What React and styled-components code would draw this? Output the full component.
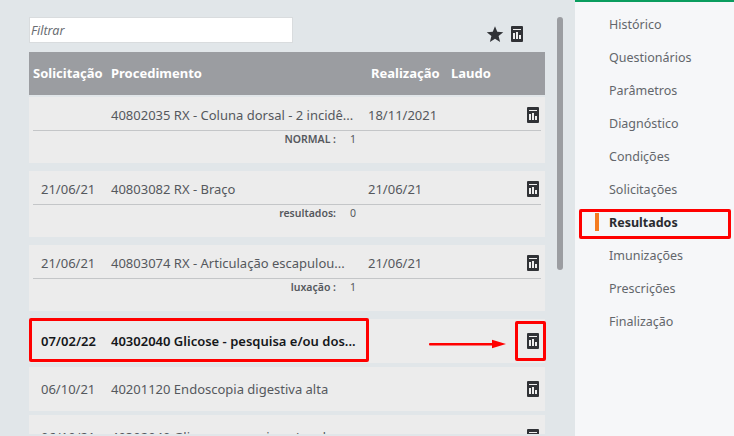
import React from 'react';
import styled, { createGlobalStyle } from 'styled-components';

const rows = [
    { date: '', name: '40802035 RX - Coluna dorsal - 2 incidê...', done: '18/11/2021', label: 'NORMAL :', value: '1' },
    { date: '21/06/21', name: '40803082 RX - Braço', done: '21/06/21', label: 'resultados:', value: '0' },
    { date: '21/06/21', name: '40803074 RX - Articulação escapulou...', done: '21/06/21', label: 'luxação :', value: '1' },
    { date: '07/02/22', name: '40302040 Glicose - pesquisa e/ou dos...', bold: true },
    { date: '06/10/21', name: '40201120 Endoscopia digestiva alta' },
    { date: '06/10/21', name: '40302040 Glicose - pesquisa e/ou dos...' },
];

const menu = [
    'Histórico',
    'Questionários',
    'Parâmetros',
    'Diagnóstico',
    'Condições',
    'Solicitações',
    'Resultados',
    'Imunizações',
    'Prescrições',
    'Finalização',
];

const ReportIcon = () => (
    <IconSvg viewBox='0 0 12 16'>
        <rect width='12' height='16' rx='1' fill='#303236' />
        <rect x='2' y='3' width='8' height='1' fill='#eee' />
        <rect x='2' y='7' width='2' height='6' fill='#eee' />
        <rect x='5' y='6' width='2' height='7' fill='#eee' />
        <rect x='8' y='9' width='2' height='4' fill='#eee' />
    </IconSvg>
);

const App = () => {
    return (
        <>
            <GlobalStyle />
            <Page>
                <Main>
                    <TopBar>
                        <FilterInput placeholder='Filtrar' />
                        <TopIcons>
                            <Star viewBox='0 0 24 24'>
                                <path d='M12 1.500l3 7.600 8 .6-6.200 5.100 2 8-6.800-4.400-6.800 4.400 2-8L1 9.700l8-.6z' fill='#303236' />
                            </Star>
                            <ReportIcon />
                        </TopIcons>
                    </TopBar>
                    <TableHead>
                        <HeadCell $w={78}>Solicitação</HeadCell>
                        <HeadCell $w={260}>Procedimento</HeadCell>
                        <HeadCell $w={80}>Realização</HeadCell>
                        <HeadCell>Laudo</HeadCell>
                    </TableHead>
                    {rows.map((row, i) => (
                        <Row key={i} $bold={row.bold}>
                            <RowMain $hasDetail={!!row.label}>
                                <DateCell>{row.date}</DateCell>
                                <NameCell>{row.name}</NameCell>
                                <DoneCell>{row.done}</DoneCell>
                                <ReportIcon />
                            </RowMain>
                            {row.label && (
                                <Detail>
                                    <DetailLabel>{row.label}</DetailLabel>
                                    <DetailValue>{row.value}</DetailValue>
                                </Detail>
                            )}
                        </Row>
                    ))}
                    <Scrollbar />
                    <MarkRow />
                    <MarkIcon />
                    <Arrow viewBox='0 0 78 10'>
                        <rect x='0' y='4' width='66' height='2.500' rx='1' fill='#f00' />
                        <path d='M63 .8l14 4.200-14 4.200z' fill='#f00' />
                    </Arrow>
                </Main>
                <Side>
                    <SideList>
                        {menu.map((item) => (
                            <SideItem key={item} $active={item === 'Resultados'}>
                                {item}
                            </SideItem>
                        ))}
                    </SideList>
                    <MarkSide />
                </Side>
            </Page>
        </>
    );
};

export default App;

const GlobalStyle = createGlobalStyle`
    html, body {
        margin: 0;
        height: 100%;
        overflow: hidden;
    }
    body {
        font-family: "Noto Sans", "Open Sans", sans-serif;
        background-color: #e1e6e9;
    }
`;

const Page = styled.div`
    display: flex;
    width: 734px;
    height: 436px;
    overflow: hidden;
`;

const Main = styled.div`
    position: relative;
    width: 575px;
    height: 434px;
    padding: 17px 30px 0 29px;
    box-sizing: border-box;
    overflow: hidden;
    flex-shrink: 0;
`;

const TopBar = styled.div`
    display: flex;
    justify-content: space-between;
    height: 26px;
    margin-bottom: 9px;
`;

const FilterInput = styled.input`
    width: 264px;
    height: 26px;
    box-sizing: border-box;
    border: 1px solid #d9dcde;
    background: #fff;
    padding: 0 2px 0 1px;
    font-family: inherit;
    font-size: 12.5px;
    outline: none;

    &::placeholder {
        color: #6a6d72;
        font-style: italic;
        opacity: 1;
    }
`;

const TopIcons = styled.div`
    display: flex;
    align-items: center;
    gap: 7px;
    padding: 4px 22px 0 0;
    height: 30px;
    box-sizing: border-box;
`;

const Star = styled.svg`
    width: 18px;
    height: 18px;
`;

const IconSvg = styled.svg`
    width: 12px;
    height: 16px;
    flex-shrink: 0;
`;

const TableHead = styled.div`
    display: flex;
    align-items: center;
    height: 43px;
    padding: 0 4px 2px;
    margin-bottom: 2px;
    box-sizing: border-box;
    background-color: #9b9da1;
`;

const HeadCell = styled.div`
    width: ${(p) => (p.$w ? `${p.$w}px` : 'auto')};
    font-size: 13px;
    font-weight: 700;
    color: #fff;
    white-space: nowrap;
`;

const Row = styled.div`
    background-color: #ececec;
    margin-bottom: ${(p) => (p.$bold ? '4px' : '8px')};
    font-weight: ${(p) => (p.$bold ? 600 : 400)};
    color: ${(p) => (p.$bold ? '#15171a' : '#55585d')};

    &:nth-of-type(n + 7) {
        margin-bottom: 4px;
    }
`;

const RowMain = styled.div`
    display: flex;
    align-items: center;
    height: ${(p) => (p.$hasDetail ? '34px' : '44px')};
    margin: 0 4px;
    padding: ${(p) => (p.$hasDetail ? '3px 2px 0 0' : '0 2px 0 0')};
    box-sizing: border-box;
    font-size: 13px;
    border-bottom: ${(p) => (p.$hasDetail ? '1px solid #c4c6c8' : 'none')};
`;

const DateCell = styled.div`
    width: 78px;
    padding-left: 8px;
    box-sizing: border-box;
    flex-shrink: 0;
`;

const NameCell = styled.div`
    width: 257px;
    flex-shrink: 0;
    white-space: nowrap;
`;

const DoneCell = styled.div`
    flex: 1;
`;

const Detail = styled.div`
    display: flex;
    height: 32px;
    box-sizing: border-box;
    padding-top: 1px;
    font-size: 10.5px;
`;

const DetailLabel = styled.div`
    width: 307px;
    text-align: right;
    font-weight: 600;
`;

const DetailValue = styled.div`
    margin-left: 14px;
`;

const Scrollbar = styled.div`
    position: absolute;
    left: 557px;
    top: 17px;
    width: 6px;
    height: 253px;
    border-radius: 3px;
    background-color: #9b9da1;
`;

const MarkRow = styled.div`
    position: absolute;
    left: 29px;
    top: 318px;
    width: 340px;
    height: 44px;
    box-sizing: border-box;
    border: 3px solid #f00;
    border-radius: 2px;
`;

const MarkIcon = styled.div`
    position: absolute;
    left: 515px;
    top: 321px;
    width: 31px;
    height: 40px;
    box-sizing: border-box;
    border: 3px solid #f00;
    border-radius: 2px;
`;

const Arrow = styled.svg`
    position: absolute;
    left: 429px;
    top: 339px;
    width: 78px;
    height: 10px;
`;

const Side = styled.div`
    position: relative;
    flex: 1;
    height: 436px;
    box-sizing: border-box;
    border-top: 2px solid #0a9d5f;
    background-color: #f6f7f9;
`;

const SideList = styled.div`
    display: flex;
    flex-direction: column;
    padding: 6px 0 0 20px;
`;

const SideItem = styled.div`
    position: relative;
    height: 33px;
    line-height: 33px;
    padding-left: 14px;
    font-size: 12.5px;
    font-weight: ${(p) => (p.$active ? 700 : 400)};
    color: ${(p) => (p.$active ? '#2a2c30' : '#63666b')};

    &::before {
        content: '';
        display: ${(p) => (p.$active ? 'block' : 'none')};
        position: absolute;
        left: 0;
        top: 7px;
        width: 4px;
        height: 18px;
        background-color: #f47b20;
    }
`;

const MarkSide = styled.div`
    position: absolute;
    left: 4px;
    top: 207px;
    width: 152px;
    height: 30px;
    box-sizing: border-box;
    border: 3px solid #f00;
    border-radius: 2px;
`;
